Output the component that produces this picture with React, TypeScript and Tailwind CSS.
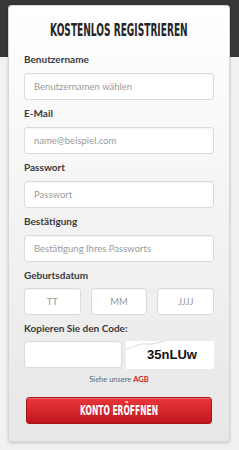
import React from "react";

const fields = [
	{ label: "Benutzername", placeholder: "Benutzernamen wählen", type: "text" },
	{ label: "E-Mail", placeholder: "name@beispiel.com", type: "email" },
	{ label: "Passwort", placeholder: "Passwort", type: "password" },
	{ label: "Bestätigung", placeholder: "Bestätigung Ihres Passworts", type: "password" },
];

const inputCls =
	"h-[27px] min-w-0 rounded-[3px] border border-[#dadada] bg-white px-[9px] text-[9.5px] text-[#333] shadow-[inset_0_1px_1px_rgba(0,0,0,0.04)] outline-none placeholder:text-[#9a9a9a]";

function Label({ children }: { children: React.ReactNode }) {
	return (
		<div className="mb-[7px] h-[12px] text-[10px] leading-[12px] font-bold text-[#3a3a3a]">
			{children}
		</div>
	);
}

export default function App() {
	return (
		<div
			className="relative min-h-[450px] w-full overflow-hidden bg-[#f1f1f1]"
			style={{ fontFamily: "Lato, 'Open Sans', sans-serif" }}
		>
			{/* dark header strip */}
			<div className="absolute inset-x-0 top-0 h-[57px] bg-[#373737]" />

			<div className="relative px-[8px] pt-[5px] pb-[8px]">
				<div className="w-[222px] rounded-[3px] border border-[#d6d6d6] bg-gradient-to-b from-white to-[#e7e7e7] px-[15px] pt-[12px] pb-[17px] shadow-[0_1px_3px_rgba(0,0,0,0.18)]">
					<div className="mb-[11px] flex h-[24px] items-center justify-center">
						<span
							className="inline-block scale-x-[0.56] text-[18px] leading-[24px] font-bold whitespace-nowrap text-[#262626] uppercase"
							style={{ fontFamily: "'DejaVu Sans Condensed', 'DejaVu Sans', sans-serif" }}
						>
							Kostenlos registrieren
						</span>
					</div>

					<form className="flex flex-col gap-[7px]" onSubmit={(e) => e.preventDefault()}>
						{fields.map((f) => (
							<div key={f.label}>
								<Label>{f.label}</Label>
								<input type={f.type} placeholder={f.placeholder} className={inputCls + " w-full"} />
							</div>
						))}

						<div>
							<Label>Geburtsdatum</Label>
							<div className="grid grid-cols-3 gap-[10px]">
								{["TT", "MM", "JJJJ"].map((p) => (
									<input key={p} placeholder={p} className={inputCls + " w-full text-center"} />
								))}
							</div>
						</div>

						<div>
							<Label>Kopieren Sie den Code:</Label>
							<div className="flex gap-[4px]">
								<input className={inputCls + " w-[98px] shrink-0"} />
								<div className="relative flex h-[28px] min-w-0 flex-1 items-center justify-center bg-white">
									<svg className="absolute top-0 left-0" width="40" height="10" viewBox="0 0 40 10">
										<path d="M0 8 C8 7 12 2 20 3 S32 1 40 0" fill="none" stroke="#cfcfcf" strokeWidth="0.8" />
									</svg>
									<span
										className="relative pl-[4px] text-[13px] font-bold text-[#111]"
										style={{ fontFamily: "'Liberation Sans', Arial, sans-serif" }}
									>
										35nLUw
									</span>
								</div>
							</div>
						</div>

						<div className="-mt-[1px] text-center text-[7.5px] leading-[10px] text-[#666]">
							Siehe unsere <span className="font-bold text-[#d42027]">AGB</span>
						</div>

						<button
							type="submit"
							className="mx-[2px] mt-[5px] flex h-[27px] items-center justify-center rounded-[3px] border border-[#a8141a] bg-gradient-to-b from-[#e8373c] to-[#bf141b] shadow-[inset_0_1px_0_rgba(255,255,255,0.25)]"
						>
							<span
								className="inline-block scale-x-[0.6] text-[14px] font-bold whitespace-nowrap text-white uppercase"
								style={{ fontFamily: "'DejaVu Sans Condensed', 'DejaVu Sans', sans-serif" }}
							>
								Konto eröffnen
							</span>
						</button>
					</form>
				</div>
			</div>
		</div>
	);
}
